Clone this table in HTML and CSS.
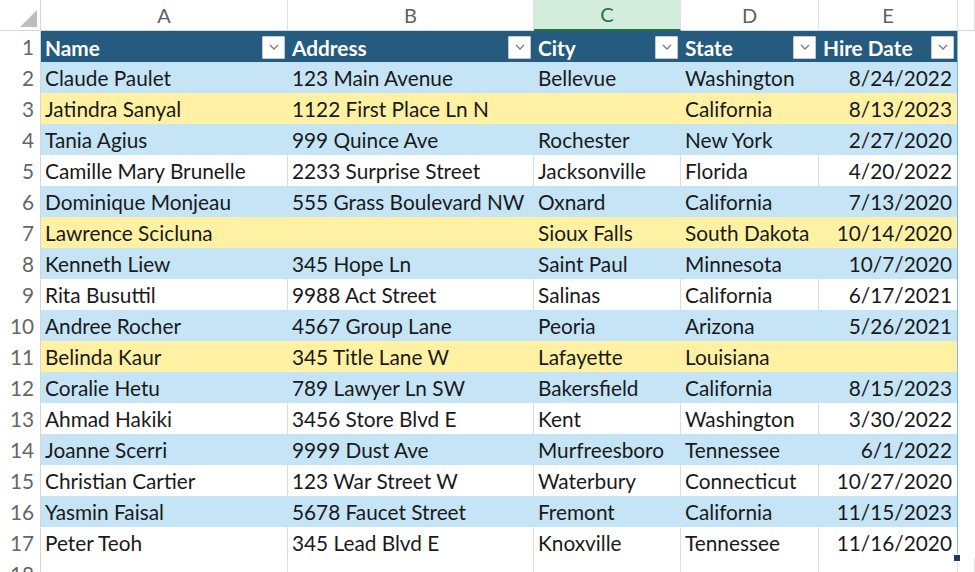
FILE: index.html
```html
<!DOCTYPE html>
<html>
<head>
<meta charset="utf-8">
<link rel="stylesheet" href="styles.css">
</head>
<body>
<div class="sheet">
  <div class="row colhead">
    <div class="corner"><span class="tri"></span></div>
    <div class="ch">A</div>
    <div class="ch">B</div>
    <div class="ch sel">C</div>
    <div class="ch">D</div>
    <div class="ch">E</div>
    <div class="ch"></div>
  </div>

  <div class="row thead">
    <div class="rh">1</div>
    <div class="c th"><span>Name</span><i class="fb"><svg viewBox="0 0 10 6"><path d="M1 1l4 4 4-4"/></svg></i></div>
    <div class="c th"><span>Address</span><i class="fb"><svg viewBox="0 0 10 6"><path d="M1 1l4 4 4-4"/></svg></i></div>
    <div class="c th"><span>City</span><i class="fb"><svg viewBox="0 0 10 6"><path d="M1 1l4 4 4-4"/></svg></i></div>
    <div class="c th"><span>State</span><i class="fb"><svg viewBox="0 0 10 6"><path d="M1 1l4 4 4-4"/></svg></i></div>
    <div class="c th"><span>Hire Date</span><i class="fb"><svg viewBox="0 0 10 6"><path d="M1 1l4 4 4-4"/></svg></i></div>
    <div class="c out"></div>
  </div>

  <div class="row blue"><div class="rh">2</div><div class="c">Claude Paulet</div><div class="c">123 Main Avenue</div><div class="c">Bellevue</div><div class="c">Washington</div><div class="c num">8/24/2022</div><div class="c out"></div></div>
  <div class="row yellow"><div class="rh">3</div><div class="c">Jatindra Sanyal</div><div class="c">1122 First Place Ln N</div><div class="c"></div><div class="c">California</div><div class="c num">8/13/2023</div><div class="c out"></div></div>
  <div class="row blue"><div class="rh">4</div><div class="c">Tania Agius</div><div class="c">999 Quince Ave</div><div class="c">Rochester</div><div class="c">New York</div><div class="c num">2/27/2020</div><div class="c out"></div></div>
  <div class="row white"><div class="rh">5</div><div class="c">Camille Mary Brunelle</div><div class="c">2233 Surprise Street</div><div class="c">Jacksonville</div><div class="c">Florida</div><div class="c num">4/20/2022</div><div class="c out"></div></div>
  <div class="row blue"><div class="rh">6</div><div class="c">Dominique Monjeau</div><div class="c">555 Grass Boulevard NW</div><div class="c">Oxnard</div><div class="c">California</div><div class="c num">7/13/2020</div><div class="c out"></div></div>
  <div class="row yellow"><div class="rh">7</div><div class="c">Lawrence Scicluna</div><div class="c"></div><div class="c">Sioux Falls</div><div class="c">South Dakota</div><div class="c num">10/14/2020</div><div class="c out"></div></div>
  <div class="row blue"><div class="rh">8</div><div class="c">Kenneth Liew</div><div class="c">345 Hope Ln</div><div class="c">Saint Paul</div><div class="c">Minnesota</div><div class="c num">10/7/2020</div><div class="c out"></div></div>
  <div class="row white"><div class="rh">9</div><div class="c">Rita Busuttil</div><div class="c">9988 Act Street</div><div class="c">Salinas</div><div class="c">California</div><div class="c num">6/17/2021</div><div class="c out"></div></div>
  <div class="row blue"><div class="rh">10</div><div class="c">Andree Rocher</div><div class="c">4567 Group Lane</div><div class="c">Peoria</div><div class="c">Arizona</div><div class="c num">5/26/2021</div><div class="c out"></div></div>
  <div class="row yellow"><div class="rh">11</div><div class="c">Belinda Kaur</div><div class="c">345 Title Lane W</div><div class="c">Lafayette</div><div class="c">Louisiana</div><div class="c num"></div><div class="c out"></div></div>
  <div class="row blue"><div class="rh">12</div><div class="c">Coralie Hetu</div><div class="c">789 Lawyer Ln SW</div><div class="c">Bakersfield</div><div class="c">California</div><div class="c num">8/15/2023</div><div class="c out"></div></div>
  <div class="row white"><div class="rh">13</div><div class="c">Ahmad Hakiki</div><div class="c">3456 Store Blvd E</div><div class="c">Kent</div><div class="c">Washington</div><div class="c num">3/30/2022</div><div class="c out"></div></div>
  <div class="row blue"><div class="rh">14</div><div class="c">Joanne Scerri</div><div class="c">9999 Dust Ave</div><div class="c">Murfreesboro</div><div class="c">Tennessee</div><div class="c num">6/1/2022</div><div class="c out"></div></div>
  <div class="row white"><div class="rh">15</div><div class="c">Christian Cartier</div><div class="c">123 War Street W</div><div class="c">Waterbury</div><div class="c">Connecticut</div><div class="c num">10/27/2020</div><div class="c out"></div></div>
  <div class="row blue"><div class="rh">16</div><div class="c">Yasmin Faisal</div><div class="c">5678 Faucet Street</div><div class="c">Fremont</div><div class="c">California</div><div class="c num">11/15/2023</div><div class="c out"></div></div>
  <div class="row white last"><div class="rh">17</div><div class="c">Peter Teoh</div><div class="c">345 Lead Blvd E</div><div class="c">Knoxville</div><div class="c">Tennessee</div><div class="c num active">11/16/2020<span class="handle"></span></div><div class="c out"></div></div>
  <div class="row empty"><div class="rh">18</div><div class="c"></div><div class="c"></div><div class="c"></div><div class="c"></div><div class="c"></div><div class="c out"></div></div>
</div>
</body>
</html>
```

FILE: styles.css
```css
html, body {
  margin: 0;
  padding: 0;
  background: #ffffff;
  overflow: hidden;
}
body {
  font-family: Lato, "Liberation Sans", sans-serif;
  font-size: 20.8px;
  color: #1a1a1a;
}
.sheet {
  width: 975px;
  height: 572px;
  overflow: hidden;
}
.row {
  display: grid;
  grid-template-columns: 41px 247px 246px 147px 138px 139px 1fr;
  height: 31px;
  box-sizing: border-box;
}
.colhead {
  height: 31px;
}
.corner {
  background: #ffffff;
  border-right: 1px solid #d6d6d6;
  border-bottom: 1px solid #d6d6d6;
  position: relative;
}
.tri {
  position: absolute;
  right: 3px;
  bottom: 3px;
  width: 0;
  height: 0;
  border-left: 17px solid transparent;
  border-bottom: 17px solid #bdbdbd;
}
.ch {
  background: #ffffff;
  border-right: 1px solid #e1e1e1;
  border-bottom: 1px solid #d6d6d6;
  color: #5f5f5f;
  text-align: center;
  line-height: 30px;
  font-size: 20px;
}
.ch.sel {
  background: #d3ecdc;
  color: #217346;
  border-bottom: 2px solid #217346;
  line-height: 29px;
}
.rh {
  background: #ffffff;
  border-right: 1px solid #d6d6d6;
  border-bottom: 1px solid #e1e1e1;
  color: #666666;
  text-align: right;
  padding-right: 6px;
  line-height: 31px;
}
.c {
  box-sizing: border-box;
  padding: 0 4px;
  line-height: 31px;
  white-space: nowrap;
  overflow: hidden;
  border-bottom: 1px solid #7fbae2;
  position: relative;
}
.c.num {
  text-align: right;
  padding-right: 5px;
  border-right: 1px solid #7fbae2;
}
.c.out {
  background: #ffffff;
  border-bottom: 1px solid #e1e1e1;
  border-right: none;
}
.blue .c { background: #c5e4f6; }
.yellow .c { background: #fff1a3; }
.white .c {
  background: #ffffff;
  border-right: 1px solid #dcdcdc;
}
.white .c.num { border-right: 1px solid #7fbae2; }
.blue .c.out, .yellow .c.out, .white .c.out { background: #ffffff; border-right: none; }
.thead .c.th {
  background: #245b7e;
  color: #ffffff;
  font-weight: bold;
  display: flex;
  align-items: center;
  justify-content: space-between;
  padding: 1px 3px 0 4px;
  border-bottom: 1px solid #7fbae2;
}
.thead .c.th:nth-child(6) {
  border-right: 1px solid #7fbae2;
}
.fb {
  width: 23px;
  height: 23px;
  background: #ffffff;
  border: 1px solid #c8c8c8;
  box-sizing: border-box;
  display: flex;
  align-items: center;
  justify-content: center;
  border-radius: 1px;
}
.fb svg {
  width: 10px;
  height: 6px;
  fill: none;
  stroke: #7a7a7a;
  stroke-width: 1.3;
}
.empty .c {
  background: #ffffff;
  border-right: 1px solid #e1e1e1;
  border-bottom: 1px solid #e1e1e1;
}
.active {
  overflow: visible !important;
}
.handle {
  position: absolute;
  right: -4px;
  bottom: -4px;
  width: 6px;
  height: 6px;
  background: #1e3a5f;
  border: 1px solid #ffffff;
  z-index: 2;
}
```
